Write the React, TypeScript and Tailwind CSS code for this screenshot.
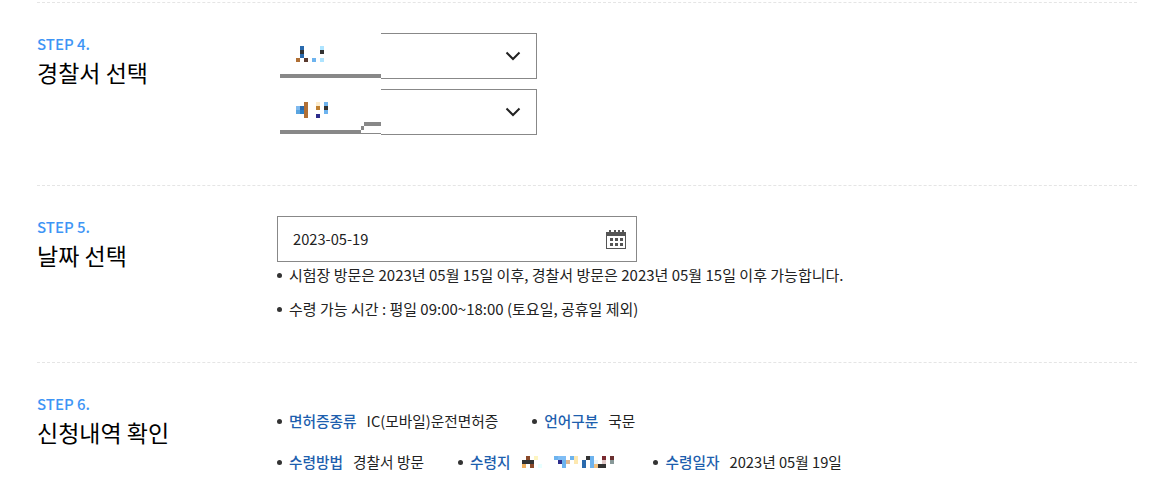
const FONT = "font-['Noto_Sans_CJK_KR','Noto_Sans',sans-serif]";

type Px = [number, number, string, number?, number?];

function Mosaic({ width, height, pixels, className }: { width: number; height: number; pixels: Px[]; className?: string }) {
  return (
    <svg width={width} height={height} viewBox={`0 0 ${width} ${height}`} className={className} shapeRendering="crispEdges">
      {pixels.map(([x, y, fill, w = 4, h = 4], i) => (
        <rect key={i} x={x} y={y} width={w} height={h} fill={fill} />
      ))}
    </svg>
  );
}

// offsets are relative to the select's outer box (277, top)
const firstCover: Px[] = [
  [0, 0, "#ffffff", 104, 46],
  [23, 13, "#2a6aad"], [43, 13, "#aee4ff"],
  [23, 17, "#333333"], [43, 17, "#333333"],
  [23, 21, "#2a6aad"],
  [19, 25, "#b06f35"], [27, 25, "#5a3a2e"], [35, 25, "#6db3ee"], [43, 25, "#aee4ff"],
  [3, 41, "#888888", 101, 4],
];

const secondCover: Px[] = [
  [0, 0, "#ffffff", 104, 46],
  [27, 13, "#b06f35", 4, 16],
  [39, 13, "#fdeccc"], [47, 13, "#6db3ee"],
  [19, 17, "#7fb9ee"], [23, 17, "#2a6aad"], [39, 17, "#c08030"], [47, 17, "#333333"],
  [19, 21, "#5aa5e0"], [23, 21, "#2a80c8"], [47, 21, "#6db3ee"],
  [39, 25, "#2d2d8c"],
  [3, 41, "#888888", 81, 4],
  [84, 37, "#888888", 3, 4],
  [87, 33, "#888888", 17, 4],
  [84, 44, "#888888", 20, 1],
];

function Chevron() {
  return (
    <svg width="16" height="10" viewBox="0 0 16 10" fill="none" stroke="#222222" strokeWidth="2" className="mr-[15px]">
      <path d="M1.5 1.5 8 8l6.5-6.5" />
    </svg>
  );
}

function SelectBox({ cover }: { cover: Px[] }) {
  return (
    <div className="relative flex h-[46px] w-[260px] items-center justify-end border border-[#888888] bg-white">
      <Chevron />
      <Mosaic width={104} height={46} pixels={cover} className="absolute left-[-1px] top-[-1px]" />
    </div>
  );
}

function CalendarIcon() {
  return (
    <svg width="20" height="19" viewBox="0 0 20 19" shapeRendering="crispEdges" fill="#555555">
      {[3, 8, 12, 16].map((x) => (
        <rect key={x} x={x} y="0" width="2" height="2" />
      ))}
      <rect x="0" y="2" width="20" height="4" />
      <path fillRule="evenodd" d="M0 6h20v13H0zM1 6v12h18V6z" />
      {[4, 9, 14].map((x) => [8, 13].map((y) => <rect key={`${x}-${y}`} x={x} y={y} width="3" height="3" />))}
    </svg>
  );
}

function StepTitle({ step, title }: { step: string; title: string }) {
  return (
    <div className="w-[240px] shrink-0 pt-[1px]">
      <p className="text-[15px] font-medium leading-[20px] text-[#3e95f5]">{step}</p>
      <h3 className="mt-[1px] text-[23px] font-normal leading-[34px] text-black">{title}</h3>
    </div>
  );
}

function Bullet({ children, className }: { children: React.ReactNode; className?: string }) {
  return (
    <li className={`flex items-center leading-[20px] text-[#222222] ${className ?? "text-[15px]"}`}>
      <span className="mr-[7px] h-[5px] w-[5px] rounded-full bg-[#333333]" />
      {children}
    </li>
  );
}

function Info({ label, value }: { label: string; value: React.ReactNode }) {
  return (
    <Bullet className="text-[14.7px]">
      <span className="mr-[10px] font-medium text-[#1e5fae]">{label}</span>
      <span>{value}</span>
    </Bullet>
  );
}

// offsets from x=522, y=454
const placeMosaic: Px[] = [
  [6, 0, "#8a4a2a"], [14, 0, "#fdf5c0"],
  [34, 0, "#6db3ee"], [38, 0, "#7fbdf5"], [42, 0, "#7fbdf5"], [50, 0, "#6db3ee"], [54, 0, "#fde8b0"],
  [66, 0, "#333333"], [70, 0, "#6db3ee"], [82, 0, "#7a2a30"], [90, 0, "#6a3030"],
  [2, 4, "#333333", 12, 4],
  [38, 4, "#2d2d8c"], [42, 4, "#6db3ee"], [46, 4, "#e0b890"], [54, 4, "#fde8b0"],
  [62, 4, "#2a6aad"], [70, 4, "#6db3ee"], [74, 4, "#e8f4fa"], [82, 4, "#e0c8c8"], [90, 4, "#889999"],
  [2, 8, "#f0b060"], [10, 8, "#8a4a2a"], [18, 8, "#e8ffff"],
  [42, 8, "#6db3ee"], [62, 8, "#2a6aad"], [70, 8, "#6db3ee"], [74, 8, "#f0c080"], [78, 8, "#333333", 8, 4],
];

export default function App() {
  return (
    <div className={`${FONT} h-[502px] w-[1166px] overflow-hidden bg-white`}>
      <div className="ml-[37px] w-[1100px] pt-[2px]">
        <section className="flex h-[183px] border-t border-dashed border-[#e5e5e5] pt-[30px]">
          <StepTitle step="STEP 4." title="경찰서 선택" />
          <div className="flex flex-col gap-[10px]">
            <SelectBox cover={firstCover} />
            <SelectBox cover={secondCover} />
          </div>
        </section>

        <section className="flex h-[177px] border-t border-dashed border-[#e5e5e5] pt-[30px]">
          <StepTitle step="STEP 5." title="날짜 선택" />
          <div>
            <div className="flex h-[46px] w-[360px] items-center justify-between border border-[#888888] pl-[15px] pr-[10px] text-[14.7px] text-[#222222]">
              <span>2023-05-19</span>
              <CalendarIcon />
            </div>
            <ul className="mt-[3px] flex flex-col gap-[14px]">
              <Bullet>시험장 방문은 2023년 05월 15일 이후, 경찰서 방문은 2023년 05월 15일 이후 가능합니다.</Bullet>
              <Bullet>수령 가능 시간 : 평일 09:00~18:00 (토요일, 공휴일 제외)</Bullet>
            </ul>
          </div>
        </section>

        <section className="flex border-t border-dashed border-[#e5e5e5] pt-[30px]">
          <StepTitle step="STEP 6." title="신청내역 확인" />
          <div className="flex flex-col gap-[21px] pt-[18px]">
            <ul className="flex gap-[34px]">
              <Info label="면허증종류" value="IC(모바일)운전면허증" />
              <Info label="언어구분" value="국문" />
            </ul>
            <ul className="flex gap-[34px]">
              <Info label="수령방법" value="경찰서 방문" />
              <Info label="수령지" value={<Mosaic width={99} height={12} pixels={placeMosaic} />} />
              <Info label="수령일자" value="2023년 05월 19일" />
            </ul>
          </div>
        </section>
      </div>
    </div>
  );
}
